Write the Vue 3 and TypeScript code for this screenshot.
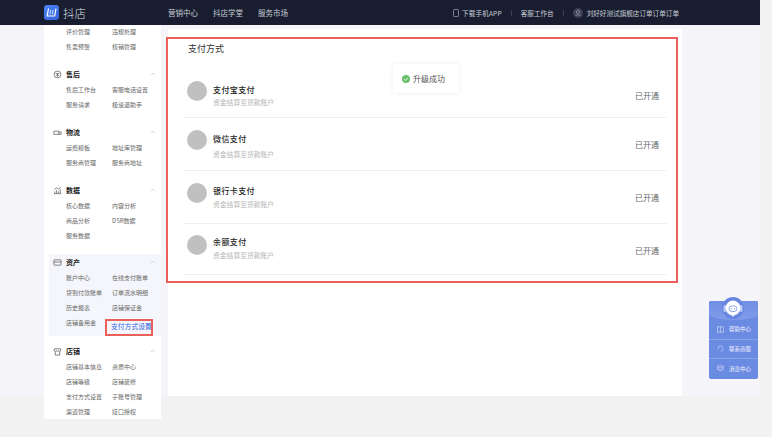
<template>
  <div class="page">
    <header class="topbar">
      <div class="brand">
        <svg class="logo" viewBox="0 0 15 15">
          <defs>
            <linearGradient id="logo-fill" x1="0" y1="0" x2="1" y2="1">
              <stop offset="0" stop-color="#4d86f5" />
              <stop offset="1" stop-color="#3560dc" />
            </linearGradient>
          </defs>
          <rect width="15" height="15" rx="3" fill="url(#logo-fill)" />
          <path d="M4.500 3.500l-1.300 7.500h7.500l1.300-7.500" fill="none" stroke="#fff" stroke-width="1.200" />
          <path d="M6.600 5l-.6 4.500M9 5l-.6 4.500" stroke="#bfe2ff" stroke-width="1" />
        </svg>
        <span class="brand-name">抖店</span>
      </div>
      <nav class="main-nav">
        <a v-for="item in navItems" :key="item">{{ item }}</a>
      </nav>
      <div class="top-actions">
        <svg class="phone" viewBox="0 0 6 8">
          <rect x=".5" y=".5" width="5" height="7" rx=".8" fill="none" stroke="#aab" stroke-width=".7" />
        </svg>
        <span class="download">下载手机APP</span>
        <i class="sep"></i>
        <span>客服工作台</span>
        <i class="sep"></i>
        <span class="avatar">
          <svg viewBox="0 0 10 10">
            <circle cx="5" cy="4" r="1.600" fill="none" stroke="#99a" stroke-width=".7" />
            <path d="M2.600 8c.3-1.600 4.500-1.600 4.800 0" fill="none" stroke="#99a" stroke-width=".7" />
          </svg>
        </span>
        <span>刘好好测试旗舰店订单订单订单</span>
      </div>
    </header>

    <div class="body">
      <aside class="sidebar">
        <div class="links first">
          <a>评价管理</a><a>违规处理</a><a>售卖预警</a><a>核销管理</a>
        </div>
        <section
          v-for="group in groups"
          :key="group.name"
          class="group"
          :class="{ current: group.current }"
        >
          <h4 class="group-title">
            <svg class="group-icon" viewBox="0 0 10 10" v-html="group.icon"></svg>
            <span>{{ group.name }}</span>
            <svg class="chevron" viewBox="0 0 6 4">
              <path d="M.8 3.200L3 1l2.200 2.200" fill="none" stroke="#ccc" stroke-width=".7" />
            </svg>
          </h4>
          <div class="links">
            <a
              v-for="link in group.links"
              :key="link"
              :class="{ active: link === activeLink && group.current }"
            >{{ link }}</a>
          </div>
        </section>
      </aside>

      <main class="content">
        <h2 class="title">支付方式</h2>
        <ul class="methods">
          <li v-for="method in methods" :key="method" class="method">
            <span class="circle"></span>
            <div class="method-text">
              <div class="method-name">{{ method }}</div>
              <div class="method-desc">资金结算至货款账户</div>
            </div>
            <span class="status">已开通</span>
          </li>
        </ul>
      </main>
    </div>

    <div class="toast">
      <svg viewBox="0 0 8 8">
        <circle cx="4" cy="4" r="4" fill="#6abf69" />
        <path d="M2.200 4.100l1.300 1.300 2.300-2.500" fill="none" stroke="#fff" stroke-width=".9" />
      </svg>
      升级成功
    </div>

    <div class="mark mark-card"></div>
    <div class="mark mark-link"></div>

    <div class="helper">
      <div class="helper-head">
        <svg class="mascot" viewBox="0 0 24 24">
          <circle cx="12" cy="11" r="11" fill="#6686e0" />
          <rect x="2.500" y="8" width="3" height="7" rx="1.500" fill="#b9c9f5" />
          <rect x="18.500" y="8" width="3" height="7" rx="1.500" fill="#b9c9f5" />
          <path d="M12 3.500a7.500 7.500 0 0 1 1 14.900L12 20l-1-1.600A7.500 7.500 0 0 1 12 3.500z" fill="#fff" />
          <rect x="8" y="9" width="8" height="5.500" rx="2.700" fill="none" stroke="#8ea6ea" stroke-width="1" />
          <circle cx="10.300" cy="11.800" r=".6" fill="#6686e0" />
          <circle cx="13.700" cy="11.800" r=".6" fill="#6686e0" />
        </svg>
      </div>
      <div v-for="row in helperRows" :key="row.label" class="helper-row">
        <svg viewBox="0 0 8 8" v-html="row.icon"></svg>
        <span>{{ row.label }}</span>
      </div>
    </div>
  </div>
</template>

<script setup lang="ts">
interface Group {
  name: string
  icon: string
  links: string[]
  current?: boolean
}

const navItems = ['营销中心', '抖店学堂', '服务市场']

const activeLink = '支付方式设置'

const line = 'fill="none" stroke="#555" stroke-width=".8"'

const groups: Group[] = [
  {
    name: '售后',
    icon: `<circle cx="5" cy="5" r="3.800" ${line}/><path d="M3 4h4M5 4v3.500M3.500 6h3" ${line}/>`,
    links: ['售后工作台', '客服电话设置', '服务请求', '极速退助手']
  },
  {
    name: '物流',
    icon: `<path d="M1 7V3.500h5.500V7M6.500 4.500H9V7H1" ${line}/>`,
    links: ['运费模板', '地址库管理', '服务商管理', '服务商地址']
  },
  {
    name: '数据',
    icon: `<path d="M1 8.500h8M2 8V6M4 8V4.500M6 8V6M8 8V3.500M1.500 4L4 2l2 1.500L8.500 1.500" ${line}/>`,
    links: ['核心数据', '内容分析', '商品分析', 'DSR数据', '服务数据']
  },
  {
    name: '资产',
    icon: `<rect x="1" y="2" width="8" height="6" rx="1" ${line}/><path d="M1 4.500h8" ${line}/>`,
    links: ['账户中心', '在线支付账单', '货到付款账单', '订单流水明细', '历史报表', '店铺保证金', '店铺备用金', '支付方式设置'],
    current: true
  },
  {
    name: '店铺',
    icon: `<path d="M1.500 4V2h7v2c0 1.200-2.300 1.200-2.300 0 0 1.200-2.400 1.200-2.400 0 0 1.200-2.300 1.200-2.300 0zM2.500 5.500V9h5V5.500" ${line}/>`,
    links: ['店铺基本信息', '资质中心', '店铺等级', '店铺装修', '支付方式设置', '子账号管理', '渠道管理', '接口授权']
  }
]

const methods = ['支付宝支付', '微信支付', '银行卡支付', '余额支付']

const white = 'fill="none" stroke="#e6ecfc" stroke-width=".6"'

const helperRows = [
  { label: '帮助中心', icon: `<rect x=".5" y="1" width="7" height="6" ${white}/><path d="M4 1v6" ${white}/>` },
  { label: '联系商服', icon: `<path d="M1.500 5V3.500a2.500 2.500 0 0 1 5 0V5M6.500 5c0 1.500-1 2-2.500 2" ${white}/>` },
  { label: '消息中心', icon: `<path d="M.8 1h6.400v4.500H4.500L3.500 7V5.500H.8zM.8 3.200h6.400" ${white}/>` }
]
</script>

<style scoped>
.page {
  position: relative;
  width: 760px;
  height: 419px;
  background: linear-gradient(#f4f4f9 396px, transparent 396px);
  font-family: "Noto Sans CJK SC", "Liberation Sans", sans-serif;
}

.topbar {
  display: flex;
  align-items: center;
  height: 25px;
  padding-left: 44px;
  background: #181e30;
  color: #c9ccd4;
  box-sizing: border-box;
}

.brand {
  display: flex;
  align-items: center;
  gap: 4px;
  width: 124px;
}

.logo {
  width: 15px;
  height: 15px;
}

.brand-name {
  font-size: 11.500px;
  font-weight: 300;
  color: #dcdee3;
}

.main-nav {
  display: flex;
  gap: 15px;
  font-size: 7.500px;
}

.top-actions {
  display: flex;
  align-items: center;
  margin-left: auto;
  padding-right: 81px;
  font-size: 6.600px;
}

.phone {
  width: 6px;
  height: 8px;
  margin-right: 3px;
}

.download {
  letter-spacing: .15px;
}

.sep {
  width: 1px;
  height: 6px;
  margin: 0 9px;
  background: #3a4052;
}

.avatar {
  display: flex;
  width: 10px;
  height: 10px;
  margin-right: 4px;
  border-radius: 50%;
  background: #3d4254;
}

.body {
  display: flex;
  align-items: flex-start;
  gap: 7px;
  padding-left: 44px;
}

.sidebar {
  flex: none;
  width: 117px;
  height: 394px;
  background: #fff;
  color: #666;
}

.links {
  display: grid;
  grid-template-columns: 46px 1fr;
  padding-left: 17px;
  font-size: 6px;
  line-height: 15px;
  white-space: nowrap;
}

.links.first {
  margin: -1px 0 0 5px;
}

.links a.active {
  margin: 8px 0 0 -1px;
  color: #2f63e0;
  font-size: 6.800px;
  line-height: 7px;
}

.group {
  margin: 12px 0 0 5px;
}

.group.current {
  margin-top: 11px;
  padding-bottom: 6px;
  background: #f5f6fb;
}

.group.current + .group {
  margin-top: 7px;
}

.group-title {
  display: flex;
  align-items: center;
  height: 16px;
  margin: 0;
  padding-left: 4px;
  color: #222;
  font-size: 7px;
  font-weight: 700;
}

.group-icon {
  width: 9px;
  height: 9px;
  margin-right: 4px;
}

.chevron {
  width: 6px;
  height: 4px;
  margin-left: auto;
  margin-right: 5px;
}

.content {
  width: 514px;
  height: 367px;
  margin-top: 4px;
  padding: 0 15px 0 16px;
  background: #fff;
  box-sizing: border-box;
}

.title {
  height: 36px;
  margin: 0;
  padding: 11px 0 0 4px;
  box-sizing: border-box;
  color: #333;
  font-size: 9px;
  font-weight: 400;
  line-height: 18px;
}

.methods {
  margin: 0;
  padding: 0;
  list-style: none;
}

.method {
  display: flex;
  align-items: flex-start;
  height: 53px;
  padding: 12px 8px 0 3px;
  border-bottom: 1px solid #f0f0f0;
  box-sizing: border-box;
}

.method:first-child {
  padding-top: 16px;
}

.method:last-child {
  height: 51px;
  padding-top: 11px;
}

.circle {
  flex: none;
  width: 20px;
  height: 20px;
  border-radius: 50%;
  background: #c0c0c0;
}

.method-text {
  margin: 2px 0 0 6px;
}

.method:nth-child(3) .method-text {
  margin-top: 1px;
}

.method:last-child .method-text {
  margin-top: 0;
}

.method-name {
  color: #222;
  font-size: 8px;
  font-weight: 500;
  line-height: 14px;
  letter-spacing: .4px;
}

.method-desc {
  margin-top: 1px;
  color: #b5b5b5;
  font-size: 6.800px;
  line-height: 10px;
}

.method:first-child .method-desc {
  margin-top: 0;
}

.method:nth-child(2) .method-desc {
  margin-top: 3px;
}

.status {
  margin-left: auto;
  margin-top: 9px;
  color: #666;
  font-size: 8px;
  line-height: 12px;
}

.method:last-child .status {
  margin-top: 10px;
}

.toast {
  position: absolute;
  left: 393px;
  top: 64px;
  display: flex;
  align-items: center;
  gap: 3px;
  width: 66px;
  height: 29px;
  padding-left: 9px;
  border-radius: 2px;
  background: #fff;
  box-shadow: 0 0 5px rgba(0, 0, 0, .08);
  box-sizing: border-box;
  color: #555;
  font-size: 8px;
}

.toast svg {
  width: 8px;
  height: 8px;
}

.mark {
  position: absolute;
  border: 2px solid #e9615a;
  box-sizing: border-box;
  pointer-events: none;
}

.mark-card {
  left: 166px;
  top: 37px;
  width: 512px;
  height: 246px;
}

.mark-link {
  left: 105px;
  top: 319px;
  width: 48px;
  height: 17px;
}

.helper {
  position: absolute;
  left: 709px;
  top: 301px;
  width: 49px;
  border-radius: 2px;
  background: #6b8ae2;
  color: #f2f5fe;
}

.helper-head {
  position: relative;
  height: 19px;
  border-radius: 2px 2px 50% 50% / 2px 2px 6px 6px;
  background: linear-gradient(#6f8ee4, #809cea);
}

.mascot {
  position: absolute;
  left: 12px;
  top: -4px;
  width: 24px;
  height: 24px;
}

.helper-row {
  display: flex;
  align-items: center;
  gap: 5px;
  height: 19.500px;
  padding-left: 8px;
  border-bottom: 1px solid #88a2ea;
  box-sizing: border-box;
  font-size: 5.500px;
}

.helper-row:last-child {
  border-bottom: none;
}

.helper-row svg {
  width: 7px;
  height: 7px;
}
</style>

<style>
html,
body {
  background: #f2f2f3;
}
</style>
